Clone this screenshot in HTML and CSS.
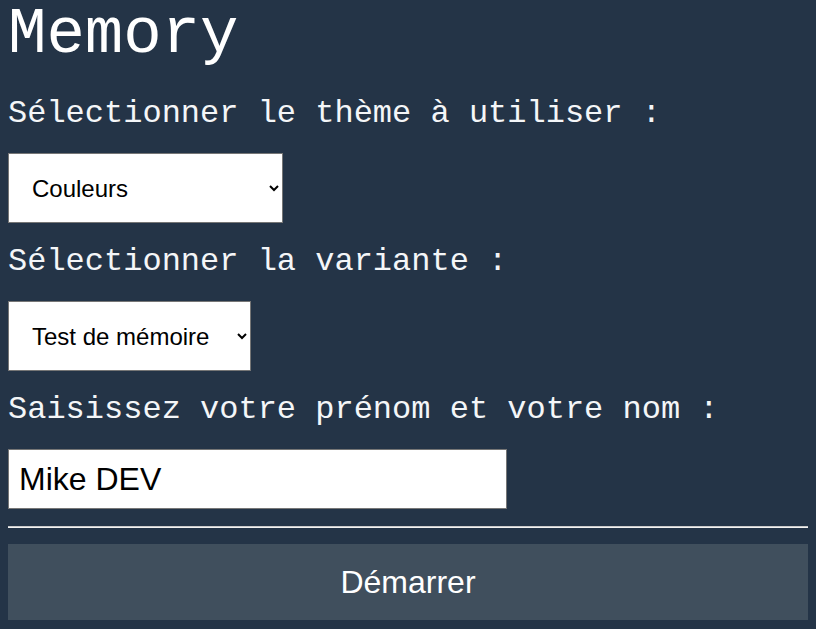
FILE: index.html
```html
<!DOCTYPE html>
<html lang="fr">
<head>
<meta charset="utf-8">
<title>Memory</title>
<link rel="stylesheet" href="styles.css">
</head>
<body>
<h1 class="title">Memory</h1>
<form class="setup">
  <label class="field-label" for="theme">Sélectionner le thème à utiliser :</label>
  <select id="theme" class="choice choice-theme">
    <option>Couleurs</option>
  </select>
  <label class="field-label" for="variant">Sélectionner la variante :</label>
  <select id="variant" class="choice choice-variant">
    <option>Test de mémoire</option>
  </select>
  <label class="field-label" for="name">Saisissez votre prénom et votre nom :</label>
  <input id="name" class="name-input" type="text" value="Mike DEV">
  <hr class="divider">
  <button type="button" class="start">Démarrer</button>
</form>
</body>
</html>
```

FILE: styles.css
```css
html, body {
  background: #243447;
}
body {
  margin: 8px;
  color: #ffffff;
  font-family: "Courier New", "Nimbus Mono PS", "Nimbus Mono L", "FreeMono", "Courier 10 Pitch", Courier, "Liberation Mono", monospace;
}
.title {
  margin: 0 0 13px;
  font-size: 64px;
  font-weight: normal;
  line-height: 54px;
}
.setup {
  display: flex;
  flex-direction: column;
  align-items: flex-start;
}
.field-label {
  display: block;
  margin: 21px 0;
  font-size: 32px;
  line-height: 36px;
  color: #f4f6f8;
}
.choice {
  box-sizing: border-box;
  height: 70px;
  padding: 0 6px 0 19px;
  font-family: "Liberation Sans", Arial, sans-serif;
  font-size: 24px;
  color: #000;
  background: #fff;
  border: 1px solid #767676;
  border-radius: 0;
}
.choice-theme { width: 275px; }
.choice-variant { width: 243px; }
.name-input {
  box-sizing: border-box;
  width: 499px;
  height: 60px;
  padding: 0 10px;
  margin: 0;
  font-family: "Liberation Sans", Arial, sans-serif;
  font-size: 32px;
  color: #000;
  background: #fff;
  border: 1px solid #767676;
  border-radius: 0;
}
.divider {
  align-self: stretch;
  margin: 17px 0 16px;
  height: 0;
  border: 0;
  border-top: 1px solid #c9c9c9;
  border-bottom: 1px solid #f2f2f2;
}
.start {
  align-self: stretch;
  height: 76px;
  margin: 0;
  padding: 0;
  border: 0;
  background: #404f5d;
  color: #ffffff;
  font-family: "Liberation Sans", Arial, sans-serif;
  font-size: 32px;
}
```
